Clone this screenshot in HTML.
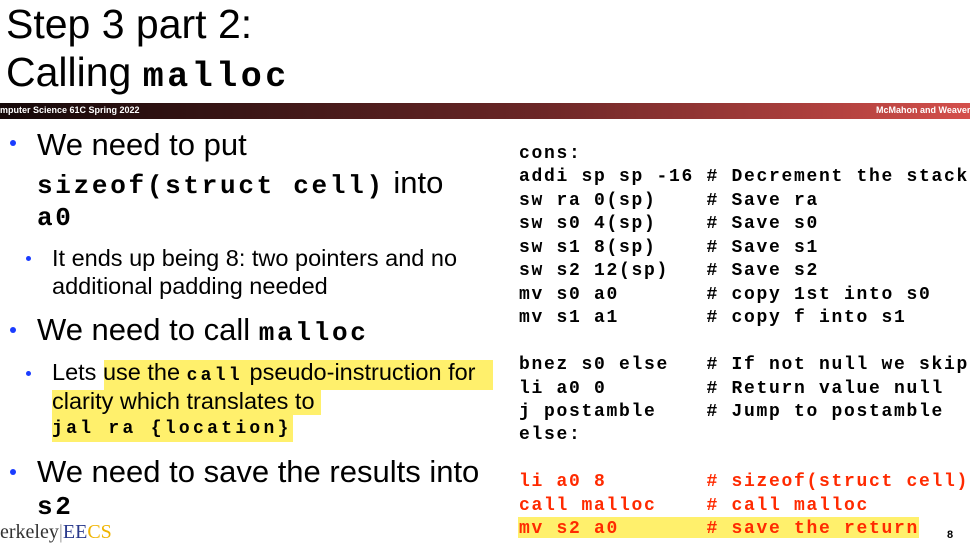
<!DOCTYPE html>
<html><head><meta charset="utf-8"><style>
*{margin:0;padding:0}
body{width:970px;height:543px;overflow:hidden;background:#fff;position:relative;font-family:"Liberation Sans",Arial,sans-serif;color:#000}
.a{position:absolute;white-space:pre;line-height:1}
.m{font-family:"Liberation Mono","Courier New",monospace;font-weight:bold}
.t{font-size:41px}
.b{font-size:31px}
.s{font-size:23.5px}
.bm{font-size:26px;letter-spacing:2.7px}
.sm{font-size:18px;letter-spacing:3.3px}
.dot{position:absolute;border-radius:50%;background:#1a3cff}
.code{font-size:18px;letter-spacing:1.7px}
.r{color:#ff2a00}
.hl{position:absolute;background:#fff06c}
</style></head><body>
<div class="a t" style="left:6px;top:4px">Step 3 part 2:</div>
<div class="a t" style="left:6px;top:52px">Calling <span class="m" style="font-size:35px;letter-spacing:3.5px">malloc</span></div>
<div style="position:absolute;left:0;top:103px;width:970px;height:16px;background:linear-gradient(90deg,#150808 0%,#3a1616 25%,#6a2626 55%,#a43c3a 80%,#d44f4b 100%)"></div>
<div class="a" style="left:0;top:106px;font-size:9px;color:#fff;font-weight:bold">mputer Science 61C Spring 2022</div>
<div class="a" style="left:876px;top:106px;font-size:9px;color:#fff;font-weight:bold">McMahon and Weaver</div>

<div class="dot" style="left:10px;top:140px;width:6px;height:6px"></div>
<div class="a b" style="left:37px;top:129px">We need to put</div>
<div class="a b" style="left:37px;top:167px"><span class="m bm">sizeof(struct cell)</span> into</div>
<div class="a b m bm" style="left:37px;top:205px">a0</div>
<div class="dot" style="left:26px;top:256px;width:5px;height:5px"></div>
<div class="a s" style="left:52px;top:247px">It ends up being 8: two pointers and no</div>
<div class="a s" style="left:52px;top:275px">additional padding needed</div>

<div class="dot" style="left:10px;top:327px;width:6px;height:6px"></div>
<div class="a b" style="left:37px;top:314px">We need to call <span class="m bm">malloc</span></div>

<div class="hl" style="left:104px;top:360px;width:389px;height:30px"></div>
<div class="hl" style="left:52px;top:390px;width:269px;height:25px"></div>
<div class="hl" style="left:52px;top:415px;width:241px;height:27px"></div>
<div class="dot" style="left:26px;top:371px;width:5px;height:5px"></div>
<div class="a s" style="left:52px;top:361px">Lets use the <span class="m sm">call</span> pseudo-instruction for</div>
<div class="a s" style="left:52px;top:390px">clarity which translates to</div>
<div class="a m sm" style="left:52px;top:420px">jal ra {location}</div>

<div class="dot" style="left:10px;top:469px;width:6px;height:6px"></div>
<div class="a b" style="left:37px;top:456px">We need to save the results into</div>
<div class="a m bm" style="left:37px;top:494px">s2</div>
<div class="a" style="left:0;top:522px;font-family:'Liberation Serif',serif;font-size:20px;color:#333">erkeley<span style="color:#999">|</span><span style="color:#2a3a8c">EE</span><span style="color:#f0b400">CS</span></div>

<div class="hl" style="left:518px;top:517px;width:401px;height:21px"></div>
<div class="a m code" style="left:519px;top:143px;line-height:23.45px">cons:
addi sp sp -16 # Decrement the stack
sw ra 0(sp)    # Save ra
sw s0 4(sp)    # Save s0
sw s1 8(sp)    # Save s1
sw s2 12(sp)   # Save s2
mv s0 a0       # copy 1st into s0
mv s1 a1       # copy f into s1

bnez s0 else   # If not null we skip
li a0 0        # Return value null
j postamble    # Jump to postamble
else:

<span class="r">li a0 8        # sizeof(struct cell)
call malloc    # call malloc
mv s2 a0       # save the return</span></div>
<div class="a" style="left:947px;top:530px;font-size:11px;font-weight:bold">8</div>
</body></html>
